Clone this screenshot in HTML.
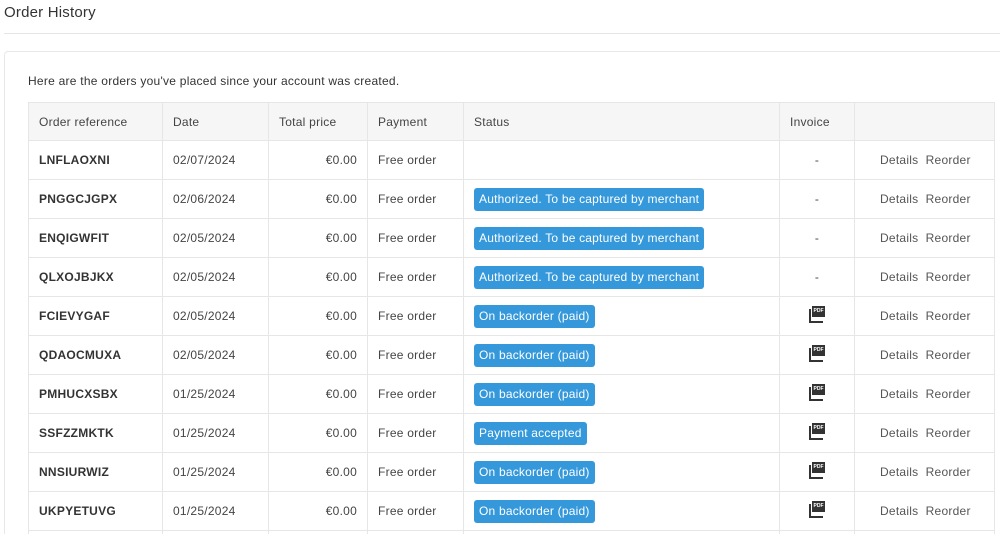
<!DOCTYPE html>
<html><head><meta charset="utf-8"><style>
*{margin:0;padding:0;box-sizing:border-box}
html,body{width:1000px;height:534px;overflow:hidden}
body{background:#fff;font-family:"Liberation Sans",Arial,sans-serif;color:#333;position:relative}
.title{position:absolute;left:4px;top:4px;font-size:15px;color:#333;letter-spacing:.2px}
.hr{position:absolute;left:4px;right:0;top:33px;border-top:1px solid #e5e5e5}
.card{position:absolute;left:4px;top:51px;width:1010px;height:600px;border:1px solid #e8e8e8;border-radius:4px}
.intro{position:absolute;left:28px;top:74px;font-size:12px;color:#333;letter-spacing:.25px}
table{position:absolute;left:28px;top:102px;border-collapse:collapse;font-size:12px;table-layout:fixed;letter-spacing:.25px}
td,th{border:1px solid #e6e6e6;padding:0 10px;height:39px;vertical-align:middle;white-space:nowrap;color:#444}
th{height:38px;background:#f6f6f6;font-weight:normal;text-align:left;color:#444}
td.r{font-weight:bold;color:#333}
td.p{text-align:right}
td.c{text-align:center}
.b{display:inline-block;background:#3498db;color:#fff;border-radius:3px;padding:0 5px;height:23px;line-height:23px;font-size:12px;letter-spacing:.2px}
.act{padding-left:25px;color:#555}
.pdf{display:inline-block;position:relative;width:16px;height:15px;vertical-align:middle;top:-3px}
.pdf:before{content:"";position:absolute;left:0;top:3px;width:12px;height:12px;border-left:2px solid #333;border-bottom:2px solid #333}
.pdf:after{content:"PDF";position:absolute;left:3px;top:0;width:13px;height:11px;background:#333;color:#fff;font-size:5px;font-weight:bold;line-height:11px;text-align:center;letter-spacing:0}
</style></head><body>
<div class="title">Order History</div>
<div class="hr"></div>
<div class="card"></div>
<div class="intro">Here are the orders you've placed since your account was created.</div>
<table>
<colgroup><col style="width:134px"><col style="width:106px"><col style="width:99px"><col style="width:96px"><col style="width:316px"><col style="width:75px"><col style="width:140px"></colgroup>
<tr><th>Order reference</th><th>Date</th><th>Total price</th><th>Payment</th><th>Status</th><th>Invoice</th><th></th></tr>
<tr><td class="r">LNFLAOXNI</td><td>02/07/2024</td><td class="p">€0.00</td><td>Free order</td><td></td><td class="c">-</td><td class="act">Details&nbsp; Reorder</td></tr>
<tr><td class="r">PNGGCJGPX</td><td>02/06/2024</td><td class="p">€0.00</td><td>Free order</td><td><span class="b">Authorized. To be captured by merchant</span></td><td class="c">-</td><td class="act">Details&nbsp; Reorder</td></tr>
<tr><td class="r">ENQIGWFIT</td><td>02/05/2024</td><td class="p">€0.00</td><td>Free order</td><td><span class="b">Authorized. To be captured by merchant</span></td><td class="c">-</td><td class="act">Details&nbsp; Reorder</td></tr>
<tr><td class="r">QLXOJBJKX</td><td>02/05/2024</td><td class="p">€0.00</td><td>Free order</td><td><span class="b">Authorized. To be captured by merchant</span></td><td class="c">-</td><td class="act">Details&nbsp; Reorder</td></tr>
<tr><td class="r">FCIEVYGAF</td><td>02/05/2024</td><td class="p">€0.00</td><td>Free order</td><td><span class="b">On backorder (paid)</span></td><td class="c"><span class="pdf"></span></td><td class="act">Details&nbsp; Reorder</td></tr>
<tr><td class="r">QDAOCMUXA</td><td>02/05/2024</td><td class="p">€0.00</td><td>Free order</td><td><span class="b">On backorder (paid)</span></td><td class="c"><span class="pdf"></span></td><td class="act">Details&nbsp; Reorder</td></tr>
<tr><td class="r">PMHUCXSBX</td><td>01/25/2024</td><td class="p">€0.00</td><td>Free order</td><td><span class="b">On backorder (paid)</span></td><td class="c"><span class="pdf"></span></td><td class="act">Details&nbsp; Reorder</td></tr>
<tr><td class="r">SSFZZMKTK</td><td>01/25/2024</td><td class="p">€0.00</td><td>Free order</td><td><span class="b">Payment accepted</span></td><td class="c"><span class="pdf"></span></td><td class="act">Details&nbsp; Reorder</td></tr>
<tr><td class="r">NNSIURWIZ</td><td>01/25/2024</td><td class="p">€0.00</td><td>Free order</td><td><span class="b">On backorder (paid)</span></td><td class="c"><span class="pdf"></span></td><td class="act">Details&nbsp; Reorder</td></tr>
<tr><td class="r">UKPYETUVG</td><td>01/25/2024</td><td class="p">€0.00</td><td>Free order</td><td><span class="b">On backorder (paid)</span></td><td class="c"><span class="pdf"></span></td><td class="act">Details&nbsp; Reorder</td></tr>
<tr><td class="r"></td><td></td><td></td><td></td><td></td><td></td><td></td></tr>
</table>
</body></html>
